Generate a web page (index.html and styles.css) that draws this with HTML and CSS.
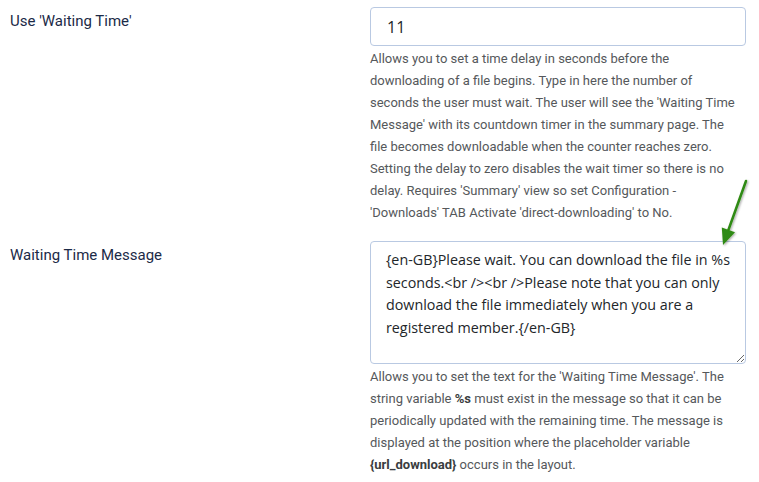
FILE: index.html
```html
<!DOCTYPE html>
<html lang="en">
<head>
    <meta charset="UTF-8">
    <meta name="viewport" content="width=device-width, initial-scale=1.0">
    <title>Download Options</title>
    <link rel="stylesheet" href="styles.css">
</head>
<body>
    <div class="options">
        <div class="option-row">
            <label class="option-label" for="waitTime">Use 'Waiting Time'</label>
            <div class="option-control">
                <input type="text" id="waitTime" class="field" value="11">
                <p class="help">Allows you to set a time delay in seconds before the downloading of a file begins. Type in here the number of seconds the user must wait. The user will see the 'Waiting Time Message' with its countdown timer in the summary page. The file becomes downloadable when the counter reaches zero. Setting the delay to zero disables the wait timer so there is no delay. Requires 'Summary' view so set Configuration - 'Downloads' TAB Activate 'direct-downloading' to No.</p>
            </div>
        </div>

        <div class="option-row">
            <label class="option-label" for="waitMessage">Waiting Time Message</label>
            <div class="option-control">
                <!-- pointer to the message field -->
                <svg class="pointer" width="40" height="80" viewBox="0 0 40 80">
                    <defs>
                        <filter id="soft" x="-50%" y="-50%" width="200%" height="200%">
                            <feDropShadow dx="1" dy="1" stdDeviation="1" flood-color="#000" flood-opacity="0.35"/>
                        </filter>
                    </defs>
                    <g filter="url(#soft)">
                        <line x1="28" y1="10" x2="10.4" y2="59" stroke="#2f8a12" stroke-width="2.5" stroke-linecap="round"/>
                        <polygon points="3.8,56.5 17,61.3 5,74" fill="#2f8a12"/>
                    </g>
                </svg>
                <textarea id="waitMessage" class="field area">{en-GB}Please wait. You can download the file in %s seconds.&lt;br /&gt;&lt;br /&gt;Please note that you can only download the file immediately when you are a registered member.{/en-GB}</textarea>
                <p class="help">Allows you to set the text for the 'Waiting Time Message'. The string variable <b>%s</b> must exist in the message so that it can be periodically updated with the remaining time. The message is displayed at the position where the placeholder variable <b>{url_download}</b> occurs in the layout.</p>
            </div>
        </div>
    </div>
</body>
</html>
```

FILE: styles.css
```css
/* Basic reset */
* {
    margin: 0;
    padding: 0;
    box-sizing: border-box;
}

body {
    font-family: Roboto, "Liberation Sans", sans-serif;
    background-color: #fff;
}

.options {
    padding-top: 7px;
}

/* One setting: label on the left, field and help on the right */
.option-row {
    display: grid;
    grid-template-columns: 370px 376px;
    margin-bottom: 17px;
}

.option-label {
    padding: 4px 0 0 10px;
    font-size: 15px;
    line-height: 20px;
    color: #1b2a47;
}

.option-control {
    position: relative;
}

/* Inputs */
.field {
    display: block;
    width: 100%;
    border: 1px solid #b9c9e2;
    border-radius: 4px;
    background: #fff;
    color: #22262a;
    font-family: "Open Sans", sans-serif;
    font-size: 16px;
    padding: 0 16px;
    height: 39px;
    outline: none;
}

.area {
    height: 123px;
    padding: 7px 15px;
    font-size: 14.3px;
    line-height: 22.6px;
    resize: vertical;
}

/* Help text under each field */
.help {
    max-width: 372px;
    margin-top: 2px;
    font-size: 13px;
    line-height: 22px;
    color: #55585b;
}

.help b {
    color: #3a3d40;
}

.pointer {
    position: absolute;
    left: 348px;
    top: -70px;
}
```
